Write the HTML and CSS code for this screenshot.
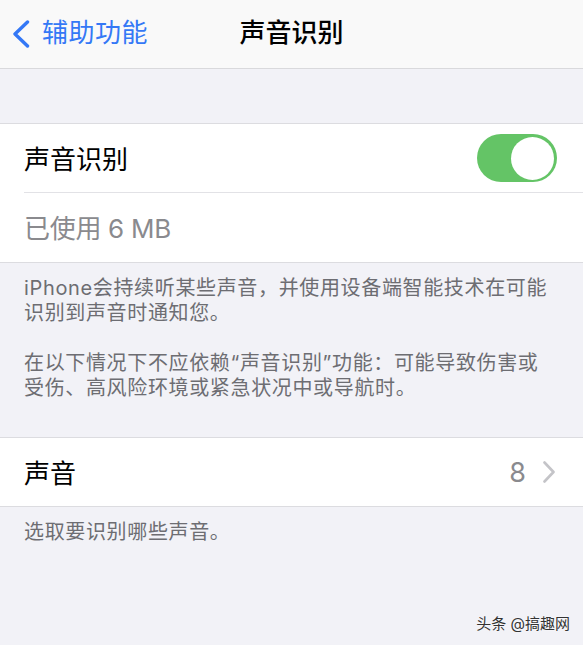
FILE: index.html
```html
<!DOCTYPE html>
<html lang="zh-CN">
<head>
<meta charset="utf-8">
<title>声音识别</title>
<link rel="stylesheet" href="styles.css">
</head>
<body>
<div class="page">
  <header class="nav">
    <div class="back">
      <svg class="back-icon" width="18" height="28" viewBox="0 0 18 28"><path d="M15.5 2 L3 14 L15.5 26" fill="none" stroke="#3478f6" stroke-width="3.4" stroke-linecap="round" stroke-linejoin="round"/></svg>
      <span class="back-label">辅助功能</span>
    </div>
    <div class="title">声音识别</div>
    <div class="nav-right"></div>
  </header>

  <div class="spacer"></div>

  <section class="group">
    <div class="row">
      <span class="label">声音识别</span>
      <span class="toggle"><span class="knob"></span></span>
    </div>
    <div class="row">
      <span class="label muted">已使用 6 MB</span>
    </div>
  </section>

  <div class="footer">
    <p>iPhone会持续听某些声音，并使用设备端智能技术在可能识别到声音时通知您。</p>
    <p>在以下情况下不应依赖“声音识别”功能：可能导致伤害或受伤、高风险环境或紧急状况中或导航时。</p>
  </div>

  <section class="group group-2">
    <div class="row">
      <span class="label">声音</span>
      <span class="detail">
        <span class="count">8</span>
        <svg class="chev" width="14" height="22" viewBox="0 0 14 22"><path d="M2.5 1.5 L11.5 11 L2.5 20.5" fill="none" stroke="#c4c4c8" stroke-width="2.6" stroke-linecap="round" stroke-linejoin="round"/></svg>
      </span>
    </div>
  </section>

  <div class="footer footer-2">
    <p>选取要识别哪些声音。</p>
  </div>

  <div class="watermark">头条 @搞趣网</div>
</div>
</body>
</html>
```

FILE: styles.css
```css
* { box-sizing: border-box; }
html, body {
  margin: 0;
  padding: 0;
  background: #f2f2f7;
}
body {
  font-family: "Inter", "Noto Sans CJK SC", "Noto Sans", sans-serif;
  color: #000;
}
.page {
  position: relative;
  width: 583px;
  height: 645px;
  overflow: hidden;
}
.nav {
  height: 69px;
  background: #f9f9f9;
  border-bottom: 1px solid #d9d9dc;
  display: grid;
  grid-template-columns: 1fr auto 1fr;
  align-items: center;
}
.back {
  display: flex;
  align-items: center;
  padding-left: 12px;
  gap: 12px;
}
.back-icon { display: block; }
.back-label {
  font-size: 26px;
  color: #3478f6;
  line-height: 1;
  position: relative;
  top: -1px;
  letter-spacing: 0.5px;
}
.title {
  font-size: 26px;
  font-weight: 500;
  line-height: 1;
  position: relative;
  top: -1px;
}
.spacer { height: 54px; }
.group {
  background: #fff;
  border-top: 1px solid #dcdce0;
  border-bottom: 1px solid #dcdce0;
}
.row {
  height: 69px;
  margin-left: 24px;
  padding-right: 26px;
  display: flex;
  align-items: center;
  justify-content: space-between;
  border-bottom: 1px solid #e2e2e6;
}
.row:last-child { border-bottom: none; }
.label {
  font-size: 26px;
  line-height: 1;
  padding-top: 3px;
}
.muted {
  color: #8a8a8e;
  letter-spacing: -0.3px;
}
.toggle {
  width: 80px;
  height: 48px;
  border-radius: 24px;
  background: #64c466;
  display: flex;
  align-items: center;
  justify-content: flex-end;
  padding-right: 3px;
}
.knob {
  width: 43px;
  height: 43px;
  border-radius: 50%;
  background: #fff;
}
.footer {
  padding: 13px 30px 0 24px;
  color: #6d6d72;
  font-size: 20px;
  line-height: 25px;
  letter-spacing: 0.65px;
}
.footer p { margin: 0 0 25px; }
.footer p:last-child { margin-bottom: 0; }
.group-2 { margin-top: 36px; }
.group-2 .row { height: 68px; }
.detail {
  display: flex;
  align-items: center;
  gap: 16px;
  margin-right: 1px;
}
.count {
  font-size: 27px;
  color: #8a8a8e;
  line-height: 1;
}
.chev { display: block; }
.footer-2 { padding-top: 13px; }
.watermark {
  position: absolute;
  right: 13px;
  bottom: 12px;
  font-size: 15px;
  color: #333;
  text-shadow: 0 0 2px #fff;
}
```
